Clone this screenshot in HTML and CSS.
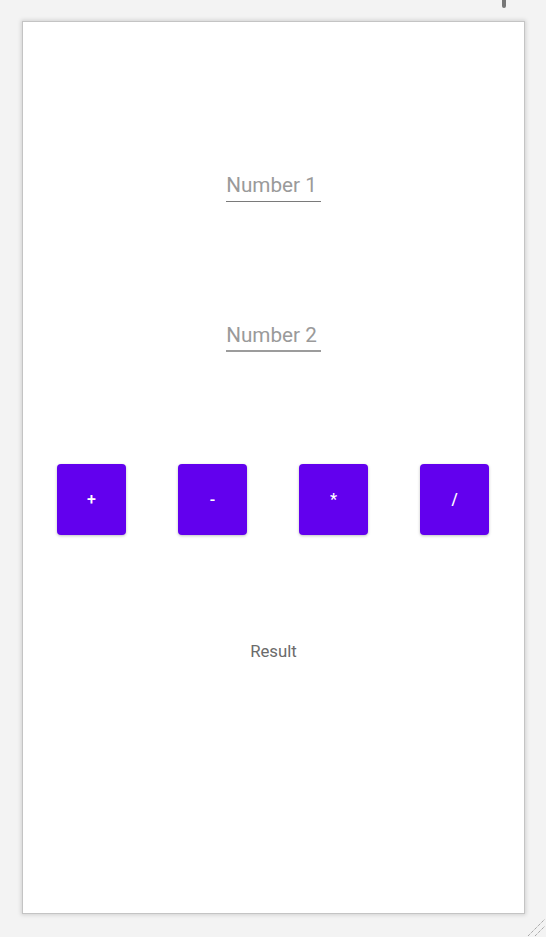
FILE: index.html
```html
<!DOCTYPE html>
<html>
<head>
<meta charset="utf-8">
<link rel="stylesheet" href="styles.css">
</head>
<body>
<div class="scroll-mark"></div>
<div class="frame">
  <div class="field field-1">Number 1</div>
  <div class="field field-2">Number 2</div>
  <div class="ops">
    <button class="op">+</button>
    <button class="op">-</button>
    <button class="op">*</button>
    <button class="op">/</button>
  </div>
  <div class="result">Result</div>
</div>
<svg class="grip" width="20" height="20" viewBox="0 0 20 20">
  <line x1="2" y1="19" x2="19" y2="2" stroke="#888" stroke-width="1" stroke-dasharray="1 1"/>
  <line x1="9" y1="19" x2="19" y2="9" stroke="#888" stroke-width="1" stroke-dasharray="1 1"/>
</svg>
</body>
</html>
```
FILE: styles.css
```css
html, body {
  margin: 0;
  padding: 0;
  background: #f3f3f3;
  height: 937px;
  overflow: hidden;
}
body {
  padding: 21px 0 0 22px;
  box-sizing: border-box;
  position: relative;
  font-family: Roboto, "Liberation Sans", sans-serif;
}
.frame {
  width: 503px;
  height: 893px;
  box-sizing: border-box;
  background: #fff;
  border: 1px solid #c4c4c4;
  box-shadow: 0 0 4px 1px rgba(0,0,0,0.14);
  display: flex;
  flex-direction: column;
  align-items: center;
}
.field {
  font-size: 20.7px;
  line-height: 24px;
  color: #9a9a9a;
  padding: 0 4px 0 0;
}
.field-1 {
  margin-top: 151px;
  padding-bottom: 4px;
  border-bottom: 1px solid #7a7a7a;
}
.field-2 {
  margin-top: 121px;
  padding-bottom: 3px;
  border-bottom: 2px solid #9c9c9c;
}
.ops {
  margin-top: 112px;
  align-self: stretch;
  padding: 0 35px 0 34px;
  display: flex;
  justify-content: space-between;
}
.op {
  width: 69px;
  height: 71px;
  border: none;
  border-radius: 4px;
  background: #6200ee;
  color: #fff;
  font-family: Roboto, "Liberation Sans", sans-serif;
  font-size: 16px;
  font-weight: 500;
  padding: 0;
  box-shadow: 0 1px 3px rgba(0,0,0,0.25);
}
.result {
  margin-top: 106px;
  font-size: 16.8px;
  line-height: 20px;
  color: #6b6b6b;
}
.scroll-mark {
  position: absolute;
  left: 502px;
  top: 0;
  width: 4px;
  height: 8px;
  background: #777;
  border-radius: 0 0 2px 2px;
}
.grip {
  position: absolute;
  left: 526px;
  top: 917px;
}
```
